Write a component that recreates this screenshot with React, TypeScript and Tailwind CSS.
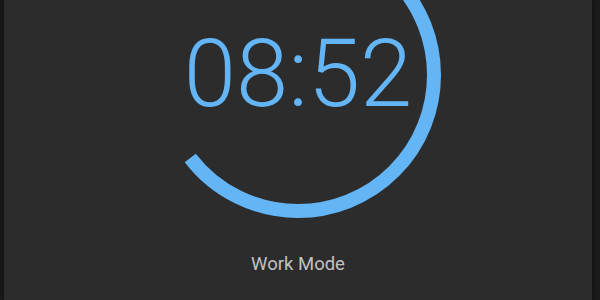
import React from 'react';

const RADIUS = 136;
const STROKE = 14;
const SIZE = (RADIUS + STROKE / 2) * 2;

function ProgressRing({ progress }: { progress: number }) {
  const circumference = 2 * Math.PI * RADIUS;
  const dash = circumference * progress;

  return (
    <svg width={SIZE} height={SIZE} viewBox={`0 0 ${SIZE} ${SIZE}`} className="[grid-area:1/1]">
      <circle
        cx={SIZE / 2}
        cy={SIZE / 2}
        r={RADIUS}
        fill="none"
        stroke="#64b5f6"
        strokeWidth={STROKE}
        strokeDasharray={`${dash} ${circumference}`}
        transform={`rotate(-90 ${SIZE / 2} ${SIZE / 2})`}
      />
    </svg>
  );
}

export default function App() {
  // 16:08 of a 25 minute session gone
  const total = 25 * 60;
  const remaining = 8 * 60 + 52;
  const progress = (total - remaining) / total;

  const mm = String(Math.floor(remaining / 60)).padStart(2, '0');
  const ss = String(remaining % 60).padStart(2, '0');

  return (
    <div className="flex h-[300px] w-full bg-[#1b1b1b] font-['Roboto',sans-serif]">
      <div className="ml-[4px] mr-[8px] flex flex-1 flex-col items-center overflow-hidden bg-[#2c2c2c] shadow-[0_0_6px_rgba(0,0,0,0.6)]">
        <div className="-mt-[68px] grid place-items-center">
          <ProgressRing progress={progress} />
          <span className="[grid-area:1/1] -mt-[2px] text-[94px] font-light leading-none text-[#64b5f6]">
            {mm}:{ss}
          </span>
        </div>
        <div className="mt-[34px] text-[18.5px] leading-6 text-[#c2c2c2]">Work Mode</div>
      </div>
    </div>
  );
}
